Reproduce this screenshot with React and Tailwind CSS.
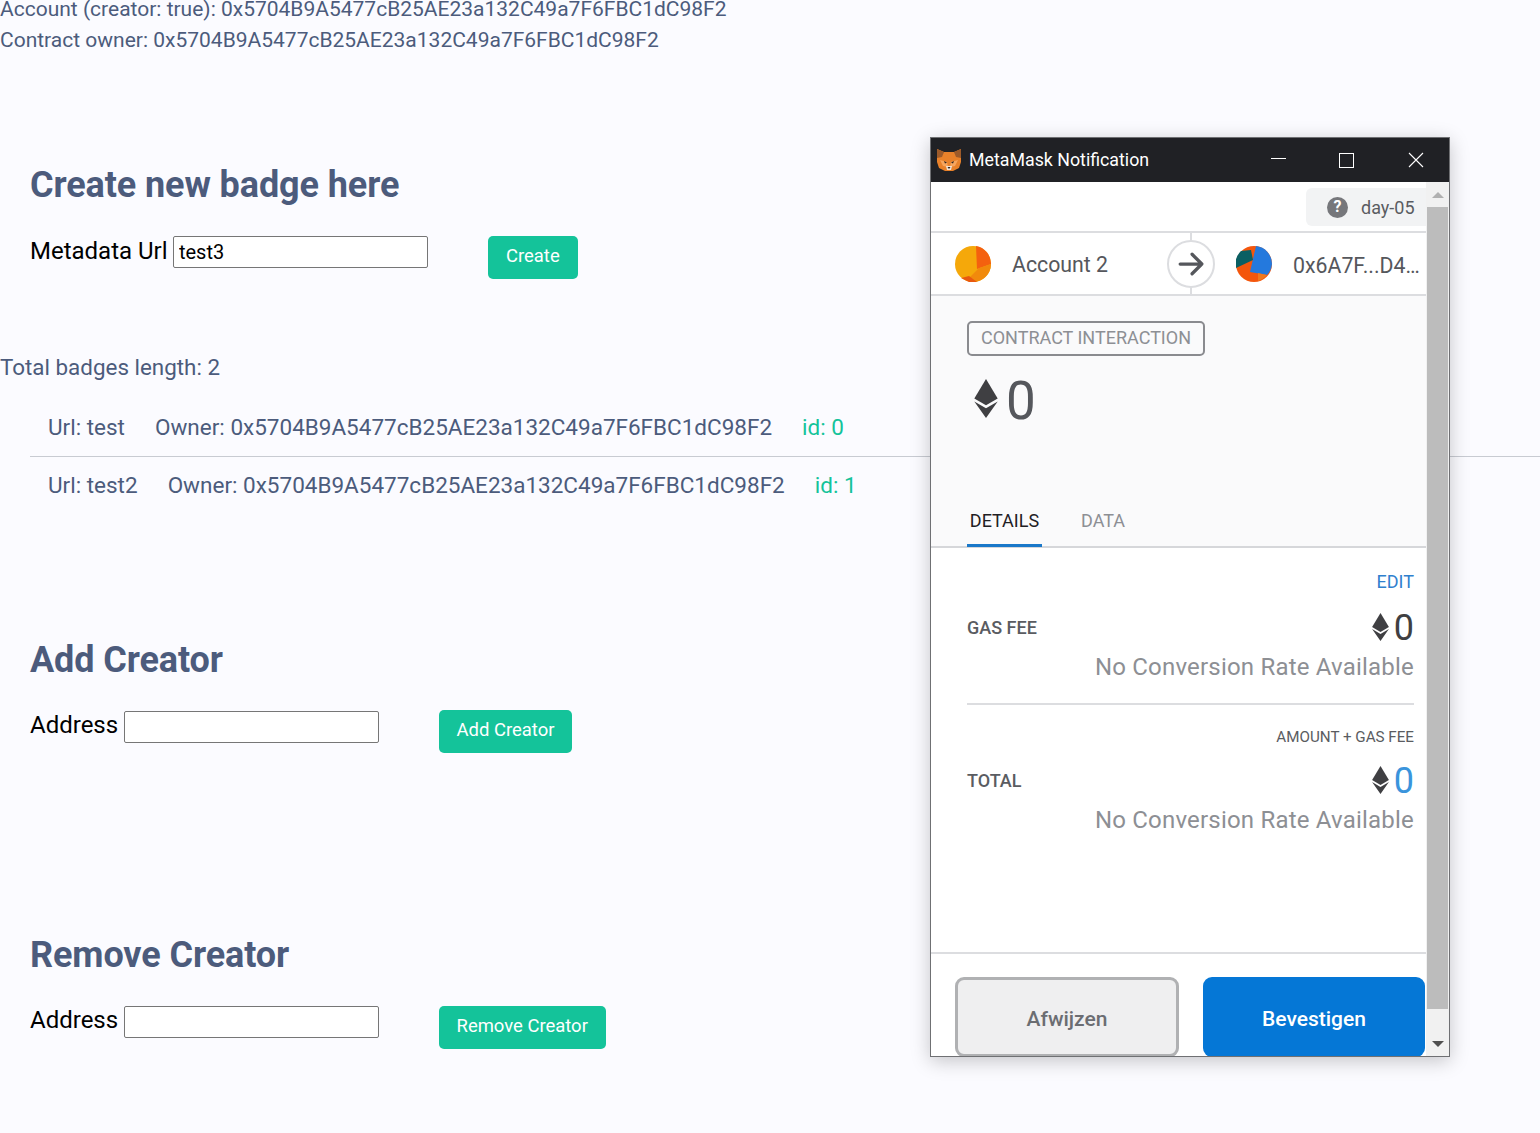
function EthIcon({ className }) {
  return (
    <svg viewBox="0 0 24 40" className={className}>
      <path d="M12 0 L24 20 L12 27 L0 20 Z" fill="#3f3f42" />
      <path d="M0 23 L12 30 L24 23 L12 40 Z" fill="#3f3f42" />
    </svg>
  );
}

function FoxIcon() {
  return (
    <svg viewBox="0 0 24 24" className="w-6 h-6 shrink-0">
      <path d="M0 1 L7 4 H17 L24 1 L24 14 L22 20 L16 23 H8 L2 20 L0 14 Z" fill="#e8812a" />
      <path d="M0 1 L7 4 L5 9 L0 10 Z" fill="#9c5a2a" />
      <path d="M24 1 L17 4 L19 9 L24 10 Z" fill="#9c5a2a" />
      <path d="M3 12 L10 14 L11 19 L6 18 Z" fill="#f6a55e" />
      <path d="M21 12 L14 14 L13 19 L18 18 Z" fill="#f6a55e" />
      <path d="M9 18 H15 L14 22 H10 Z" fill="#f3e3d3" />
      <path d="M10.5 19 H13.5 L12 21 Z" fill="#2b2320" />
      <path d="M7 13 L10 14.5 L8 15.5 Z M17 13 L14 14.5 L16 15.5 Z" fill="#2b2320" />
    </svg>
  );
}

function SourceIdenticon() {
  return (
    <svg viewBox="0 0 36 36" className="w-9 h-9 shrink-0">
      <circle cx="18" cy="18" r="18" fill="#f5a80a" />
      <path d="M21 0 A18 18 0 0 1 36 18 L22 23 Z" fill="#f4610f" />
      <path d="M36 18 A18 18 0 0 1 14 35.6 L14 32 L24 22 Z" fill="#f18a0c" />
      <path d="M6 32 L14 30 L22 36 L14 36 Z" fill="#e9590f" />
    </svg>
  );
}

function TargetIdenticon() {
  return (
    <svg viewBox="0 0 36 36" className="w-9 h-9 shrink-0">
      <circle cx="18" cy="18" r="18" fill="#f4560c" />
      <path d="M20 0 A18 18 0 0 1 36 18 A18 18 0 0 1 31 29 L14 26 Z" fill="#2479dd" />
      <path d="M5 5 L15 4 L17 14 L0 22 A18 18 0 0 1 5 5 Z" fill="#0b5f63" />
      <path d="M22 27 L31 29 A18 18 0 0 1 22 35 Z" fill="#f1791d" />
    </svg>
  );
}

function Section({ title, label, value, button, className, labelClass = "", buttonClass = "" }) {
  return (
    <section className={className}>
      <h2 className="text-[36px] leading-[44px] font-bold text-[#4c5b7c] tracking-[-0.1px]">{title}</h2>
      <div className="flex items-start mt-[29px]">
        <label className={`text-[24px] leading-[28px] text-black ${labelClass}`}>{label}</label>
        <input
          readOnly
          value={value}
          className="ml-[5.4px] w-[255px] h-[32px] bg-white border border-[#767676] rounded-[2px] px-[5px] text-[20px] text-black"
        />
        <button className={`ml-[60px] h-[43px] px-[18px] pb-[1px] bg-[#14c39a] rounded-[5px] text-white text-[18.45px] ${buttonClass}`}>{button}</button>
      </div>
    </section>
  );
}

function BadgeRow({ url, id, border }) {
  return (
    <div className={`flex items-center h-[58px] pl-[18px] gap-[30px] text-[22.5px] text-[#4c5b7c] ${border ? "border-b border-[#c8cbd2]" : ""}`}>
      <span>Url: {url}</span>
      <span>Owner: 0x5704B9A5477cB25AE23a132C49a7F6FBC1dC98F2</span>
      <span className="text-[#14c39a]">id: {id}</span>
    </div>
  );
}

function FeeRow({ label, top, valueClass, topClass }) {
  return (
    <div>
      <div className={`text-right ${topClass}`}>{top}</div>
      <div className="flex items-center justify-between mt-[15px] h-[36px]">
        <span className="text-[18px] font-medium text-[#5a5c61]">{label}</span>
        <span className="flex items-center gap-[5px]">
          <EthIcon className="w-[17px] h-[28px]" />
          <span className={`text-[36px] leading-[36px] translate-y-px ${valueClass}`}>0</span>
        </span>
      </div>
      <div className="text-right text-[24px] leading-[30px] text-[#8d8f94] tracking-[0.2px] mt-[7px]">No Conversion Rate Available</div>
    </div>
  );
}

function MetaMaskWindow() {
  return (
    <div className="absolute left-[930px] top-[137px] w-[520px] h-[920px] flex flex-col bg-white border border-[#6f7073] shadow-[0_4px_18px_rgba(0,0,0,0.22)] overflow-hidden">
      <div className="flex items-center h-[44px] shrink-0 bg-[#202125] text-white pl-[6px]">
        <FoxIcon />
        <span className="ml-[8px] pt-px text-[17.8px]">MetaMask Notification</span>
        <div className="ml-auto flex items-center">
          <span className="w-[15px] border-t border-white mr-[53px] -mt-[3px]" />
          <span className="w-[15px] h-[15px] border border-white mr-[54px]" />
          <svg viewBox="0 0 16 16" className="w-[16px] h-[16px] mr-[25px]" stroke="white" strokeWidth="1.1">
            <path d="M1 1 L15 15 M15 1 L1 15" />
          </svg>
        </div>
      </div>
      <div className="flex flex-1 min-h-0">
        <div className="flex flex-col w-[495px] min-w-0">
          <div className="flex justify-end h-[51px] shrink-0 pt-[6px] border-b-2 border-[#dcdde0]">
            <div className="flex items-center h-[38px] w-[120px] pl-[21px] bg-[#f2f3f4] rounded-l-[6px] gap-[13px]">
              <span className="flex items-center justify-center w-[21px] h-[21px] rounded-full bg-[#76777b] text-white text-[16px] font-bold">?</span>
              <span className="text-[18px] text-[#5a5c61]">day-05</span>
            </div>
          </div>
          <div className="relative flex items-center h-[63px] shrink-0 pl-[24px] border-b-2 border-[#dcdde0] text-[21.3px] text-[#55575c]">
            <SourceIdenticon />
            <span className="ml-[21px] mt-[2px]">Account 2</span>
            <span className="absolute left-[236px] top-0 w-[48px] h-[61px] flex items-center justify-center">
              <span className="absolute left-[23px] top-0 bottom-0 border-l-2 border-[#dcdde0]" />
              <span className="relative flex items-center justify-center w-[48px] h-[48px] rounded-full bg-white border-2 border-[#dcdde0]">
                <svg viewBox="0 0 24 24" className="w-[26px] h-[26px] -ml-px" fill="none" stroke="#55575c" strokeWidth="3" strokeLinecap="round" strokeLinejoin="round">
                  <path d="M2 12 H22 M13 3 L22 12 L13 21" />
                </svg>
              </span>
            </span>
            <span className="absolute left-[305px] top-[13px]"><TargetIdenticon /></span>
            <span className="absolute left-[362px] top-[17px]">0x6A7F...D4…</span>
          </div>
          <div className="h-[252px] shrink-0 bg-[#fafafb] border-b-2 border-[#d6d7da] flex flex-col">
            <div className="mt-[25px] ml-[36px] w-[238px] h-[35px] pb-[3px] flex items-center justify-center border-2 border-[#8a8b8f] rounded-[5px] text-[18px] text-[#8d8f94] whitespace-nowrap">
              CONTRACT INTERACTION
            </div>
            <div className="flex items-center ml-[43px] mt-[16px] gap-[8px]">
              <EthIcon className="w-[24px] h-[39px] -translate-y-[3px]" />
              <span className="text-[53px] leading-[58px] text-[#55575c]">0</span>
            </div>
            <div className="flex mt-auto ml-[36px] text-[18px]">
              <span className="w-[75px] h-[44px] flex justify-center items-start pt-[4px] text-[#1f2024] border-b-[3px] border-[#1a78c9] -mb-px">DETAILS</span>
              <span className="ml-[39px] pt-[4px] text-[#8d8f94]">DATA</span>
            </div>
          </div>
          <div className="flex-1 px-[36px] pr-[12px] pt-[22px]">
            <div className="pb-[21px] border-b-2 border-[#dcdde0]">
              <FeeRow label="GAS FEE" top="EDIT" topClass="text-[18px] leading-[24px] text-[#2f80ce]" valueClass="text-[#3f3f42]" />
            </div>
            <div className="pt-[22px]">
              <FeeRow label="TOTAL" top="AMOUNT + GAS FEE" topClass="text-[15.2px] leading-[20px] text-[#5a5c61]" valueClass="text-[#3a94dc]" />
            </div>
          </div>
          <div className="flex h-[104px] shrink-0 border-t-2 border-[#dcdde0] pt-[23px] pl-[24px] gap-[24px]">
            <button className="w-[224px] h-[80px] pt-[6px] bg-[#efeff0] border-[3px] border-[#b0b1b3] rounded-[9px] text-[21px] font-medium text-[#6b6d72]">Afwijzen</button>
            <button className="w-[222px] h-[80px] pt-[6px] bg-[#0577d6] rounded-[9px] text-[21px] font-medium text-white">Bevestigen</button>
          </div>
        </div>
        <div className="flex flex-col w-[23px] ml-auto bg-[#f1f1f1]">
          <span className="flex justify-center pt-[10px] h-[25px]">
            <span className="w-0 h-0 border-x-[6px] border-x-transparent border-b-[6px] border-b-[#b0b0b0]" />
          </span>
          <span className="flex-1 ml-[1px] w-[21px] bg-[#bcbcbc]" />
          <span className="flex justify-center items-end pb-[9px] h-[47px]">
            <span className="w-0 h-0 border-x-[6px] border-x-transparent border-t-[6px] border-t-[#505050]" />
          </span>
        </div>
      </div>
    </div>
  );
}

export default function App() {
  return (
    <div className="relative w-[1540px] h-[1133px] overflow-hidden bg-[#fbfbff] font-['Roboto',sans-serif]">
      <div className="-mt-[6px] text-[21px] leading-[31px] text-[#4c5b7c]">
        <p>Account (creator: true): 0x5704B9A5477cB25AE23a132C49a7F6FBC1dC98F2</p>
        <p>Contract owner: 0x5704B9A5477cB25AE23a132C49a7F6FBC1dC98F2</p>
      </div>

      <Section
        className="ml-[30px] mt-[107px]"
        title="Create new badge here"
        label="Metadata Url"
        labelClass="mt-px"
        value="test3"
        button="Create"
      />

      <p className="mt-[72px] text-[22.4px] leading-[32px] text-[#4c5b7c]">Total badges length: 2</p>
      <div className="ml-[30px] mt-[16px]">
        <BadgeRow url="test" id="0" border />
        <BadgeRow url="test2" id="1" />
      </div>

      <Section
        className="ml-[30px] mt-[123px]"
        title="Add Creator"
        label="Address"
        value=""
        button="Add Creator"
        buttonClass="-mt-px"
      />
      <Section
        className="ml-[30px] mt-[180px]"
        title="Remove Creator"
        label="Address"
        value=""
        button="Remove Creator"
      />

      <MetaMaskWindow />
    </div>
  );
}
